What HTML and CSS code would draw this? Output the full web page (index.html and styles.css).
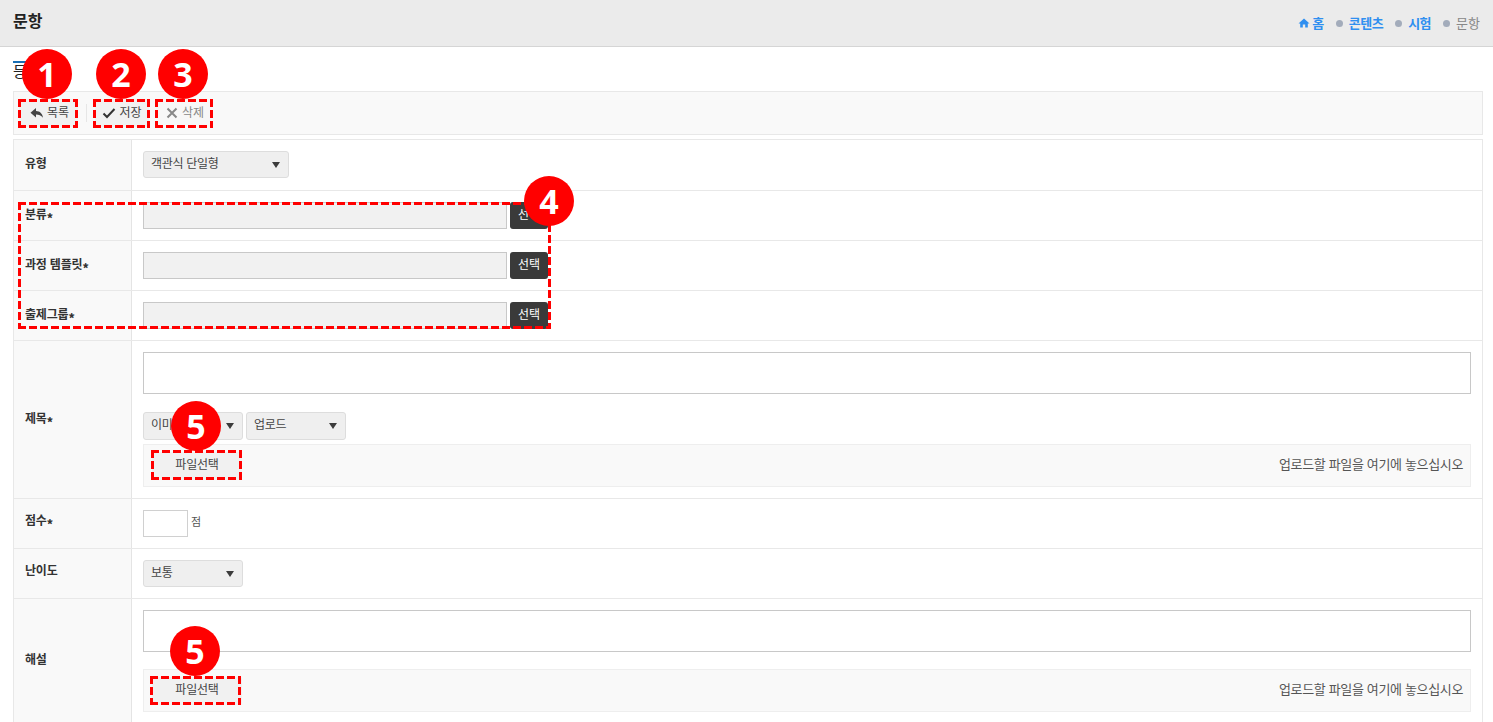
FILE: index.html
```html
<!DOCTYPE html>
<html lang="ko">
<head>
<meta charset="utf-8">
<title>문항</title>
<link rel="stylesheet" href="styles.css">
</head>
<body>
<header class="top">
  <h1>문항</h1>
  <nav class="crumbs">
    <a class="crumb link"><svg class="home" viewBox="0 0 12 12"><path d="M6 1.5 0.5 6.5H2.2V10.5H4.8V7.5H7.2V10.5H9.8V6.5H11.5Z"/></svg>홈</a>
    <span class="dot"></span><a class="crumb link">콘텐츠</a>
    <span class="dot"></span><a class="crumb link">시험</a>
    <span class="dot"></span><span class="crumb">문항</span>
  </nav>
</header>
<main class="content">
  <h2 class="title">등록</h2>
  <div class="toolbar">
    <button class="tool t1"><svg class="ico" viewBox="0 0 14 12"><path d="M6 1 0.5 5.8 6 10.4V7.4C9 7.4 11 8.2 13 10.8 12.6 6.6 10 4 6 3.9Z" fill="#444"/></svg>목록</button>
    <span class="sep"></span>
    <button class="tool t2"><svg class="ico" viewBox="0 0 14 12"><path d="M1.5 6.5 5 10 12.5 2" fill="none" stroke="#333" stroke-width="2"/></svg>저장</button>
    <button class="tool t3"><svg class="ico" viewBox="0 0 14 12"><path d="M2.5 1.5 11.5 10.5M11.5 1.5 2.5 10.5" fill="none" stroke="#888" stroke-width="2"/></svg>삭제</button>
  </div>
  <div class="form">
    <div class="row r51"><div class="label up4">유형</div><div class="val first"><div class="select w146">객관식 단일형<i></i></div></div></div>
    <div class="row r50"><div class="label">분류<span class="req">*</span></div><div class="val pick"><div class="ro"></div><button class="dark">선택</button></div></div>
    <div class="row r50"><div class="label">과정 템플릿<span class="req">*</span></div><div class="val pick"><div class="ro"></div><button class="dark">선택</button></div></div>
    <div class="row r50"><div class="label">출제그룹<span class="req">*</span></div><div class="val pick"><div class="ro"></div><button class="dark">선택</button></div></div>
    <div class="row"><div class="label">제목<span class="req">*</span></div>
      <div class="val stack">
        <div class="area a42"></div>
        <div class="selects"><div class="select w100">이미지<i></i></div><div class="select w100">업로드<i></i></div></div>
        <div class="drop"><button class="file">파일선택</button><span class="hint">업로드할 파일을 여기에 놓으십시오</span></div>
      </div>
    </div>
    <div class="row r50"><div class="label up6">점수<span class="req">*</span></div><div class="val"><div class="num"></div><span class="unit">점</span></div></div>
    <div class="row r50"><div class="label up6">난이도</div><div class="val"><div class="select w100">보통<i></i></div></div></div>
    <div class="row"><div class="label up4">해설</div>
      <div class="val stack">
        <div class="area a42 last"></div>
        <div class="drop"><button class="file">파일선택</button><span class="hint">업로드할 파일을 여기에 놓으십시오</span></div>
      </div>
    </div>
  </div>
</main>
<div class="dash d1"></div><div class="dash d2"></div><div class="dash d3"></div><div class="dash d4"></div><div class="dash d5"></div><div class="dash d6"></div>
<div class="badge b1">1</div><div class="badge b2">2</div><div class="badge b3">3</div><div class="badge b4">4</div><div class="badge b5">5</div><div class="badge b6">5</div>
</body>
</html>
```
FILE: styles.css
```css
* { box-sizing: border-box; }
html, body { margin: 0; height: 722px; overflow: hidden; background: #fff; }
body { position: relative; font-family: "Noto Sans CJK KR", "Noto Sans", sans-serif; font-size: 12px; color: #333; }
.top { height: 47px; background: #ebebeb; border-bottom: 1px solid #d5d5d5; display: flex; justify-content: space-between; align-items: center; padding: 0 13px 7px 13px; }
h1 { margin: 0; font-size: 16px; font-weight: 700; color: #222; line-height: 26px; }
.crumbs { display: flex; align-items: center; font-size: 13px; line-height: 18px; margin-top: 6px; }
.crumb { color: #888; }
.link { color: #2f8ff0; font-weight: 700; display: flex; align-items: center; letter-spacing: -0.5px; }
.home { width: 12px; height: 12px; fill: #2f8ff0; margin-right: 2px; }
.dot { width: 7px; height: 7px; border-radius: 50%; background: #a3acbb; margin: 2px 6px 0 12px; }
.content { padding: 14px 10px 0 13px; }
.title { margin: 0; width: 36px; height: 30px; border-top: 2px solid #1a6fb5; font-size: 15px; font-weight: 400; line-height: 14px; color: #222; padding-top: 1px; }
.toolbar { height: 44px; background: #f9f9f9; border: 1px solid #e8e8e8; display: flex; align-items: center; padding-left: 5px; }
.tool { height: 28px; border: 0; background: #f1f1f1; display: flex; align-items: center; justify-content: center; gap: 3px; font: inherit; color: #444; padding: 0 0 3px; border-radius: 2px; }
.ico { width: 14px; height: 12px; margin-top: 3px; }
.t1 { width: 59px; padding-left: 2px; }
.sep { width: 1px; height: 18px; background: #e6e6e6; margin: 0 8px; }
.t2 { width: 54px; margin-right: 7px; }
.t3 { width: 55px; color: #888; background: #f7f7f7; padding-left: 2px; }
.form { margin-top: 4px; border-top: 1px solid #e8e8e8; border-left: 1px solid #e8e8e8; border-right: 1px solid #e8e8e8; }
.row { display: flex; border-bottom: 1px solid #e8e8e8; }
.r50 { height: 50px; }
.r51 { height: 51px; }
.label { width: 118px; flex: none; background: #f9f9f9; border-right: 1px solid #e4e4e4; padding: 0 0 4px 11px; display: flex; align-items: center; font-weight: 700; color: #333; letter-spacing: -0.2px; white-space: pre; }
.label.up4 { padding-bottom: 6px; }
.label.up6 { padding-bottom: 8px; }
.req { font-weight: 900; margin-top: 9px; line-height: 12px; }
.val { flex: 1; padding: 0 11px; display: flex; align-items: center; min-width: 0; }
.first { padding-bottom: 1px; }
.select { height: 27px; margin-bottom: 1px; background: #efefef; border: 1px solid #ddd; border-radius: 3px; position: relative; padding: 0 0 4px 7px; display: flex; align-items: center; color: #444; letter-spacing: -0.3px; }
.select i { position: absolute; right: 8px; top: 10px; width: 0; height: 0; border-left: 4px solid transparent; border-right: 4px solid transparent; border-top: 6px solid #3c3c3c; }
.w146 { width: 146px; }
.w100 { width: 100px; }
.ro { width: 364px; height: 27px; margin-bottom: 1px; background: #f1f1f1; border: 1px solid #c8c8c8; }
.dark { width: 38px; height: 27px; margin: 0 0 1px 3px; background: #3a3a3a; color: #fff; border: 0; border-radius: 3px; font: inherit; padding: 0 0 4px; }
.stack { flex-direction: column; align-items: stretch; padding-top: 11px; padding-bottom: 11px; }
.area { background: #fff; border: 1px solid #c8c8c8; }
.a42 { height: 42px; }
.last { margin-bottom: 17px; }
.selects { display: flex; gap: 3px; margin: 18px 0 4px; }
.selects .select { height: 28px; margin-bottom: 0; padding-bottom: 5px; }
.drop { height: 43px; background: #f9f9f9; border: 1px solid #eee; display: flex; align-items: center; justify-content: space-between; padding: 0 7px 0 8px; color: #555; }
.hint { font-size: 13px; letter-spacing: -0.35px; padding-bottom: 5px; }
.file { width: 90px; height: 28px; background: #f1f1f1; border: 0; border-radius: 2px; font: inherit; color: #444; padding: 0 0 5px; letter-spacing: -0.2px; }
.num { width: 45px; height: 27px; margin-bottom: 1px; border: 1px solid #d0d0d0; background: #fff; }
.unit { margin-left: 3px; font-size: 11px; color: #555; padding-bottom: 6px; }
.dash { position: absolute; --d: repeating-linear-gradient(90deg, #f00 0 8px, transparent 8px 11px); --v: repeating-linear-gradient(180deg, #f00 0 8px, transparent 8px 11px); background: var(--d) left top / 100% 3px no-repeat, var(--d) left bottom / 100% 3px no-repeat, var(--v) left top / 3px 100% no-repeat, var(--v) right top / 3px 100% no-repeat; }
.d1 { left: 18px; top: 99px; width: 60px; height: 29px; }
.d2 { left: 93px; top: 99px; width: 57px; height: 29px; }
.d3 { left: 155px; top: 99px; width: 58px; height: 29px; }
.d4 { left: 18px; top: 202px; width: 533px; height: 127px; }
.d5 { left: 151px; top: 450px; width: 91px; height: 30px; }
.d6 { left: 150px; top: 676px; width: 91px; height: 29px; }
.badge { position: absolute; width: 50px; height: 50px; border-radius: 50%; background: #f00; color: #fff; font-family: "Open Sans", sans-serif; font-weight: 700; font-size: 34px; line-height: 50px; text-align: center; }
.b1 { left: 22px; top: 49px; }
.b2 { left: 96px; top: 49px; }
.b3 { left: 158px; top: 49px; }
.b4 { left: 524px; top: 176px; }
.b5 { left: 171px; top: 401px; }
.b6 { left: 170px; top: 626px; }
```
